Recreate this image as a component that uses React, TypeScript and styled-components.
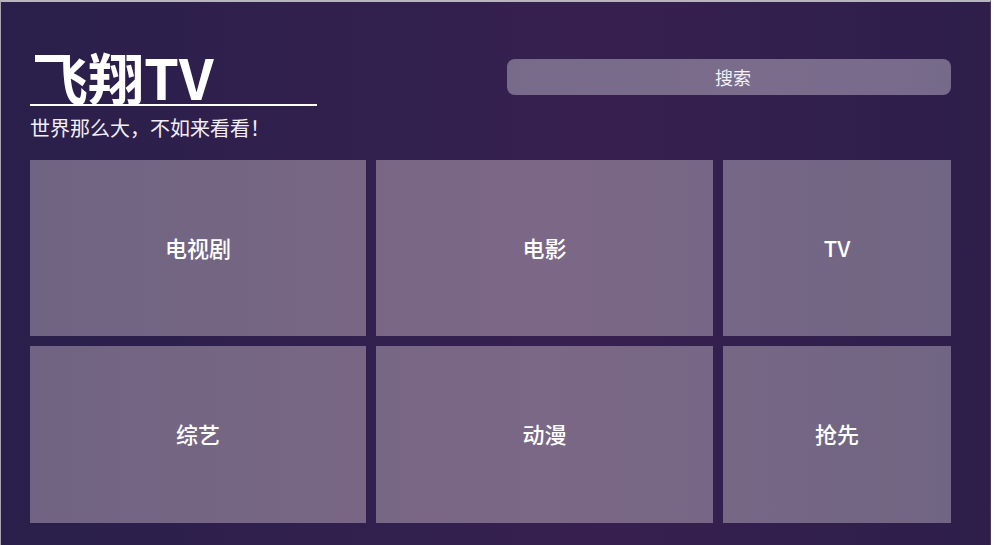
import { FC } from "react";
import styled, { createGlobalStyle } from "styled-components";

const GlobalStyle = createGlobalStyle`
  html, body {
    margin: 0;
    padding: 0;
    background: #ffffff;
  }
  body {
    font-family: "Noto Sans CJK SC", "Noto Sans", sans-serif;
  }
`;

const Frame = styled.div`
  box-sizing: border-box;
  width: 991px;
  height: 545px;
  padding: 46px 39px 22px 29px;
  border-top: 2px solid #b9b4c1;
  border-left: 1px solid #a8a3af;
  border-right: 1px solid #4a3a5c;
  background: linear-gradient(90deg, #2a1f4b 0%, #33204e 45%, #37204f 60%, #2d1e4a 100%);
  display: flex;
  flex-direction: column;
  overflow: hidden;
`;

const Header = styled.header`
  display: flex;
  justify-content: space-between;
  align-items: flex-start;
  height: 112px;
`;

const Brand = styled.div`
  display: flex;
  flex-direction: column;
`;

const Title = styled.h1`
  margin: 0;
  width: 287px;
  padding-left: 2px;
  box-sizing: border-box;
  font-size: 56px;
  line-height: 56px;
  font-weight: 700;
  color: #ffffff;
  border-bottom: 2px solid #ffffff;
`;

const Slogan = styled.p`
  margin: 8px 0 0;
  font-size: 20px;
  line-height: 28px;
  color: #f2eef6;
`;

const Search = styled.button`
  margin-top: 11px;
  width: 444px;
  height: 36px;
  padding: 0 0 0 8px;
  border: none;
  border-radius: 8px;
  background: linear-gradient(90deg, #786b8a 0%, #7b6c8b 60%, #766a8b 100%);
  color: #f4f0f8;
  font-family: inherit;
  font-size: 18px;
  cursor: pointer;
`;

const Grid = styled.div`
  display: grid;
  grid-template-columns: 336px 337px 228px;
  grid-template-rows: 176px 177px;
  gap: 10px;
  margin-top: 2px;
`;

const Tile = styled.div<{ $tone: string }>`
  display: flex;
  align-items: center;
  justify-content: center;
  padding-bottom: 3px;
  background: ${(p) => p.$tone};
  color: #ffffff;
  font-size: 22px;
  font-weight: 500;
`;

const tiles = [
  { label: "电视剧", tone: "linear-gradient(90deg, #6f6482 0%, #746683 60%, #796685 100%)" },
  { label: "电影", tone: "linear-gradient(90deg, #796685 0%, #7c6786 50%, #776685 100%)" },
  { label: "TV", tone: "linear-gradient(90deg, #756785 0%, #716683 100%)" },
  { label: "综艺", tone: "linear-gradient(90deg, #706482 0%, #756683 60%, #796685 100%)" },
  { label: "动漫", tone: "linear-gradient(90deg, #786685 0%, #7b6786 50%, #776685 100%)" },
  { label: "抢先", tone: "linear-gradient(90deg, #766785 0%, #706582 100%)" },
];

const App: FC = () => {
  return (
    <>
      <GlobalStyle />
      <Frame>
        <Header>
          <Brand>
            <Title>飞翔TV</Title>
            <Slogan>世界那么大，不如来看看！</Slogan>
          </Brand>
          <Search>搜索</Search>
        </Header>
        <Grid>
          {tiles.map((item) => (
            <Tile key={item.label} $tone={item.tone}>
              {item.label}
            </Tile>
          ))}
        </Grid>
      </Frame>
    </>
  );
};

export default App;
